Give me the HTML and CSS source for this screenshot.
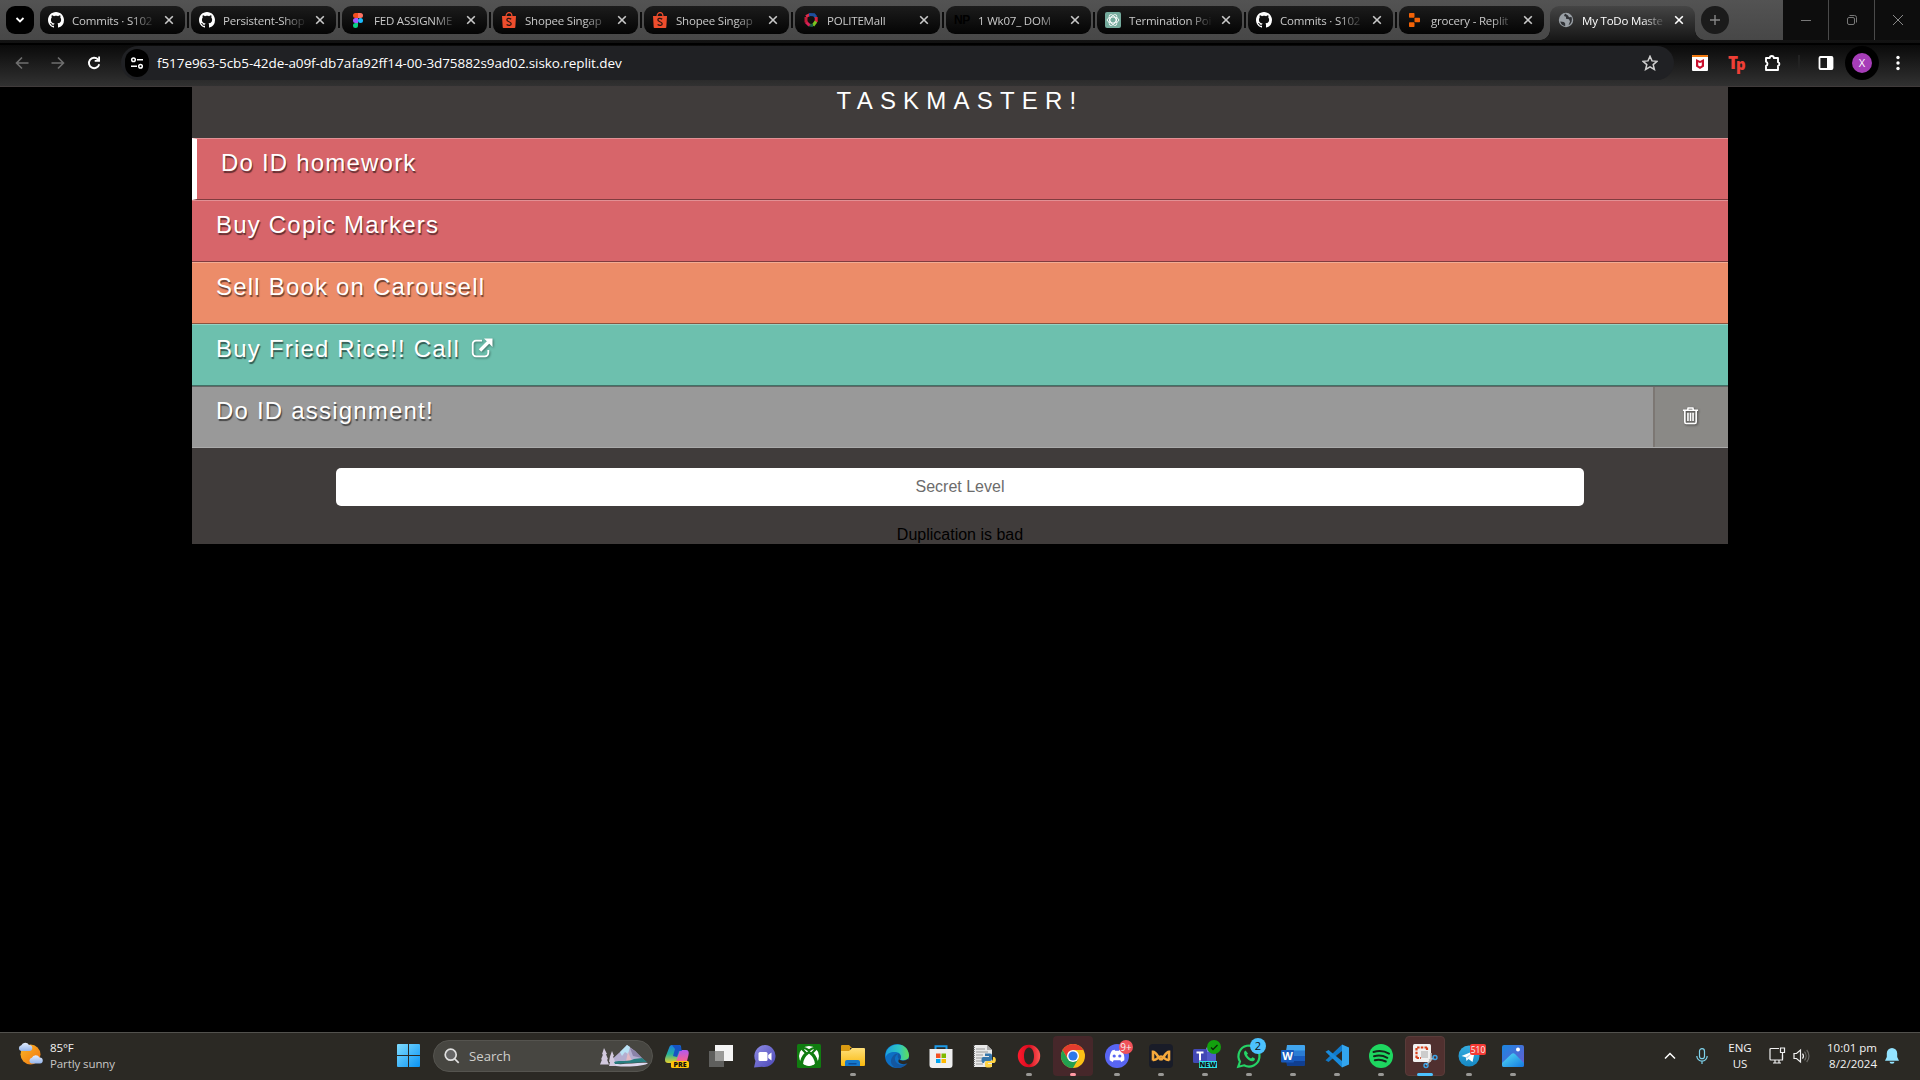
FILE: index.html
```html
<!DOCTYPE html>
<html lang="en">
<head>
<meta charset="utf-8">
<title>My ToDo Master</title>
<link rel="stylesheet" href="styles.css">
</head>
<body>
<svg class="defs" aria-hidden="true">
  <defs>
    <symbol id="github" viewBox="0 0 16 16"><path fill="#fff" d="M8 0C3.58 0 0 3.58 0 8c0 3.54 2.29 6.53 5.47 7.59.4.07.55-.17.55-.38 0-.19-.01-.82-.01-1.49-2.01.37-2.53-.49-2.69-.94-.09-.23-.48-.94-.82-1.13-.28-.15-.68-.52-.01-.53.63-.01 1.08.58 1.23.82.72 1.21 1.87.87 2.33.66.07-.52.28-.87.51-1.07-1.78-.2-3.64-.89-3.64-3.95 0-.87.31-1.59.82-2.15-.08-.2-.36-1.02.08-2.12 0 0 .67-.21 2.2.82.64-.18 1.32-.27 2-.27s1.36.09 2 .27c1.53-1.04 2.2-.82 2.2-.82.44 1.1.16 1.92.08 2.12.51.56.82 1.27.82 2.15 0 3.07-1.87 3.75-3.65 3.95.29.25.54.73.54 1.48 0 1.07-.01 1.93-.01 2.2 0 .21.15.46.55.38A8.01 8.01 0 0 0 16 8c0-4.42-3.58-8-8-8z"/></symbol>
    <symbol id="shopee" viewBox="0 0 16 16"><path fill="#ee4d2d" d="M1 4h14l-.7 11.2a.8.8 0 0 1-.8.8h-11a.8.8 0 0 1-.8-.8z"/><path d="M5 4.500C5 -.8 11 -.8 11 4.500" fill="none" stroke="#ee4d2d" stroke-width="1.200"/><path d="M10.200 7.100C7.800 5.700 5.800 6.400 5.900 8c.1 1.900 4.300 1.600 4.300 3.700 0 1.900-2.600 2.300-4.600.8" fill="none" stroke="#2b1510" stroke-width="1.300"/></symbol>
    <symbol id="x" viewBox="0 0 10 10"><path d="M1.200 1.200l7.600 7.600M8.800 1.200L1.200 8.800" fill="none" stroke="currentColor" stroke-width="1.600"/></symbol>
    <linearGradient id="win" x1="0" y1="0" x2="1" y2="1"><stop offset="0" stop-color="#7fdcff"/><stop offset="1" stop-color="#0a94f5"/></linearGradient>
    <linearGradient id="sun" x1="0" y1="0" x2="1" y2="1"><stop offset="0" stop-color="#fbb829"/><stop offset="1" stop-color="#f0720c"/></linearGradient>
    <linearGradient id="cloud" x1="0" y1="0" x2="0" y2="1"><stop offset="0" stop-color="#e4edfc"/><stop offset="1" stop-color="#94b5ec"/></linearGradient>
    <linearGradient id="copA" x1="0" y1="0" x2="0" y2="1"><stop offset="0" stop-color="#1b7de8"/><stop offset=".5" stop-color="#25b39a"/><stop offset="1" stop-color="#e8d12b"/></linearGradient>
    <linearGradient id="copB" x1="0" y1="0" x2="0" y2="1"><stop offset="0" stop-color="#b259f2"/><stop offset=".6" stop-color="#f0609a"/><stop offset="1" stop-color="#ff9a5c"/></linearGradient>
    <linearGradient id="chat" x1="0" y1="0" x2="1" y2="1"><stop offset="0" stop-color="#8f8ce6"/><stop offset="1" stop-color="#4a47b5"/></linearGradient>
    <linearGradient id="folder" x1="0" y1="0" x2="0" y2="1"><stop offset="0" stop-color="#ffe07a"/><stop offset="1" stop-color="#f9b90f"/></linearGradient>
    <linearGradient id="edgeA" x1="0" y1="0" x2="1" y2="0"><stop offset="0" stop-color="#1aa0e0"/><stop offset=".6" stop-color="#2fc7c0"/><stop offset="1" stop-color="#62df52"/></linearGradient>
    <linearGradient id="opera" x1="0" y1="0" x2="1" y2="0"><stop offset="0" stop-color="#ff1b2d"/><stop offset=".5" stop-color="#d80a1e"/><stop offset="1" stop-color="#ff5a55"/></linearGradient>
    <linearGradient id="photo" x1="0" y1="0" x2="1" y2="1"><stop offset="0" stop-color="#1a86e0"/><stop offset="1" stop-color="#6a5bd0"/></linearGradient>
    <linearGradient id="hill" x1="0" y1="0" x2="1" y2="1"><stop offset="0" stop-color="#55e0f7"/><stop offset="1" stop-color="#1478e0"/></linearGradient>
    <linearGradient id="tele" x1="0" y1="0" x2="0" y2="1"><stop offset="0" stop-color="#35ace0"/><stop offset="1" stop-color="#1688c4"/></linearGradient>
  </defs>
</svg>

<header class="browser">
  <div class="tabstrip">
    <button class="tabsearch"><svg width="10" height="10" viewBox="0 0 10 10"><path d="M1.500 3l3.500 3.500L8.500 3" fill="none" stroke="#fff" stroke-width="1.800"/></svg></button>
    <div class="tabs">
      <div class="tab"><svg class="fav"><use href="#github"/></svg><span>Commits · S102</span><svg class="close"><use href="#x"/></svg></div>
      <div class="tab"><svg class="fav"><use href="#github"/></svg><span>Persistent-Shop</span><svg class="close"><use href="#x"/></svg></div>
      <div class="tab"><svg class="fav" viewBox="0 0 16 16"><path d="M3 3.500A2.500 2.500 0 0 1 5.500 1H8v5H5.500A2.500 2.500 0 0 1 3 3.500z" fill="#f24e1e"/><path d="M8 1h2.500a2.500 2.500 0 0 1 0 5H8z" fill="#ff7262"/><path d="M3 8.500A2.500 2.500 0 0 1 5.500 6H8v5H5.500A2.500 2.500 0 0 1 3 8.500z" fill="#a259ff"/><circle cx="10.500" cy="8.500" r="2.500" fill="#1abcfe"/><path d="M3 13.500A2.500 2.500 0 0 1 5.500 11H8v2.500a2.500 2.500 0 0 1-5 0z" fill="#0acf83"/></svg><span>FED ASSIGNME</span><svg class="close"><use href="#x"/></svg></div>
      <div class="tab"><svg class="fav"><use href="#shopee"/></svg><span>Shopee Singap</span><svg class="close"><use href="#x"/></svg></div>
      <div class="tab"><svg class="fav"><use href="#shopee"/></svg><span>Shopee Singap</span><svg class="close"><use href="#x"/></svg></div>
      <div class="tab"><svg class="fav" viewBox="0 0 16 16" fill="none" stroke-width="3"><path d="M7 2.500L3 4.500" stroke="#e02b4b"/><path d="M6 2.500l5 .2 2 2.500" stroke="#1d4f9e"/><path d="M13.200 5v5" stroke="#d8213d"/><path d="M13 9.500l-3 4" stroke="#7ac520"/><path d="M10 13.500l-4-.5" stroke="#1c5f45"/><path d="M6.500 13.500L3 10" stroke="#d81e55"/><path d="M3 10.500V5" stroke="#c11c38"/></svg><span>POLITEMall</span><svg class="close"><use href="#x"/></svg></div>
      <div class="tab"><b class="fav np">NP</b><span>1 Wk07_ DOM</span><svg class="close"><use href="#x"/></svg></div>
      <div class="tab"><svg class="fav" viewBox="0 0 16 16"><rect width="16" height="16" rx="2" fill="#74aa9c"/><g fill="none" stroke="#fff" stroke-width=".9"><ellipse cx="8" cy="8" rx="5.800" ry="3"/><ellipse cx="8" cy="8" rx="5.800" ry="3" transform="rotate(60 8 8)"/><ellipse cx="8" cy="8" rx="5.800" ry="3" transform="rotate(120 8 8)"/></g></svg><span>Termination Poi</span><svg class="close"><use href="#x"/></svg></div>
      <div class="tab"><svg class="fav"><use href="#github"/></svg><span>Commits · S102</span><svg class="close"><use href="#x"/></svg></div>
      <div class="tab"><svg class="fav" viewBox="0 0 16 16" fill="#f26207"><rect x="2" y="1" width="5.500" height="4.700" rx=".7"/><rect x="7.500" y="5.700" width="5.500" height="4.600" rx=".7"/><rect x="2" y="10.300" width="5.500" height="4.700" rx=".7"/></svg><span>grocery - Replit</span><svg class="close"><use href="#x"/></svg></div>
      <div class="tab active"><svg class="fav" viewBox="0 0 16 16"><circle cx="8" cy="8" r="7.200" fill="#9aa0a6"/><path d="M2.200 9.500L6 10l1.200 1.500v2.700A6.500 6.500 0 0 1 2.200 9.500zM7 1.500L6 4l2 .8v2l3 .4 1 2.300-1.500 3.700A6.500 6.500 0 0 0 13.500 5L11 5.300 10 3.500z" fill="#303236"/></svg><span>My ToDo Maste</span><svg class="close"><use href="#x"/></svg></div>
    </div>
    <button class="newtab"><svg width="12" height="12" viewBox="0 0 12 12"><path d="M6 1v10M1 6h10" stroke="#868686" stroke-width="1.400"/></svg></button>
    <div class="winctl">
      <i><svg width="12" height="12"><path d="M1 6.500h10" stroke="#777"/></svg></i>
      <i><svg width="12" height="12" fill="none" stroke="#777"><rect x="1.500" y="3.500" width="7" height="7" rx="1.500"/><path d="M3.500 1.500h5a2 2 0 0 1 2 2v5"/></svg></i>
      <i><svg width="12" height="12"><path d="M1 1l10 10M11 1L1 11" stroke="#888"/></svg></i>
    </div>
  </div>
  <div class="toolbar">
    <svg class="nav" viewBox="0 0 16 16"><path d="M14.500 8H2.500M8 2.500L2.500 8 8 13.500" fill="none" stroke="#6f6f6f" stroke-width="1.600"/></svg>
    <svg class="nav" viewBox="0 0 16 16"><path d="M1.500 8h12M8 2.500L13.500 8 8 13.500" fill="none" stroke="#6f6f6f" stroke-width="1.600"/></svg>
    <svg class="nav" viewBox="0 0 16 16"><path d="M13.200 9.200A5.200 5.200 0 1 1 12 4.500l1 1.200" fill="none" stroke="#fff" stroke-width="1.900"/><path d="M14 1.500v5.300H8.700V5h3.500V1.500z" fill="#fff"/></svg>
    <div class="omnibox">
      <span class="site"><svg width="14" height="14" viewBox="0 0 14 14" fill="none" stroke="#fff" stroke-width="1.500"><circle cx="3.500" cy="3.800" r="1.800"/><path d="M7 3.800h6M1 10.200h6"/><circle cx="10.500" cy="10.200" r="1.800"/></svg></span>
      <span class="url">f517e963-5cb5-42de-a09f-db7afa92ff14-00-3d75882s9ad02.sisko.replit.dev</span>
      <svg class="star" viewBox="0 0 16 16"><path d="M8 1.300l2 4.600 5 .4-3.800 3.300 1.200 4.900L8 11.900l-4.400 2.600 1.200-4.900L1 6.300l5-.4z" fill="none" stroke="#d0d0d0" stroke-width="1.500"/></svg>
    </div>
    <div class="exts">
      <svg width="16" height="16"><rect width="16" height="16" rx="1" fill="#fff"/><path d="M0 2V1a1 1 0 0 1 1-1h14a1 1 0 0 1 1 1v1z" fill="#f27a11"/><path d="M4 4l4 2 4-2v7.500L8 14l-4-2.500z" fill="#c8102e"/><path d="M6.200 7.200L8 8.100l1.800-.9v3.300L8 11.400l-1.800-.9z" fill="#fff"/></svg>
      <b class="tp"><span>T</span><small>p</small></b>
      <svg width="17" height="18" viewBox="0 0 17 18"><path d="M2 4h3.800a2 2 0 0 1 4 0H14v4.200a2 2 0 0 1 0 3.800v4H2v-4a2.300 2.300 0 0 0 0-4.300z" fill="none" stroke="#fff" stroke-width="1.900" stroke-linejoin="round"/></svg>
      <i class="bar"></i>
      <svg width="16" height="16"><rect x="1.500" y="2" width="13" height="12" rx="1" fill="none" stroke="#fff" stroke-width="1.800"/><path d="M9 2h6v12H9z" fill="#fff"/></svg>
      <span class="avatar"><i>X</i></span>
      <svg width="4" height="16" fill="#fff"><circle cx="2" cy="2.500" r="1.700"/><circle cx="2" cy="8" r="1.700"/><circle cx="2" cy="13.500" r="1.700"/></svg>
    </div>
  </div>
</header>

<main class="page">
  <h1>TASKMASTER!</h1>
  <ul class="tasks">
    <li class="red current">Do ID homework</li>
    <li class="red">Buy Copic Markers</li>
    <li class="orange">Sell Book on Carousell</li>
    <li class="green">Buy Fried Rice!! Call <svg class="ext" viewBox="0 0 22 20"><path d="M11 2.700H5A3.300 3.300 0 0 0 1.700 6v9A3.300 3.300 0 0 0 5 18.300h9a3.300 3.300 0 0 0 3.300-3.300v-3" fill="none" stroke="currentColor" stroke-width="1.800"/><path d="M9 12.500l8.500-8.500" stroke="currentColor" stroke-width="3.400"/><path d="M13 .5h8.500V9z" fill="currentColor"/></svg></li>
    <li class="grey"><span>Do ID assignment!</span><button class="del"><svg width="18" height="20" viewBox="0 0 18 20" fill="none" stroke="#fff" stroke-width="1.700"><path d="M1 4.500h16M5.800 4.300L6.500 2h5l.7 2.300M3 4.500V17a1.500 1.500 0 0 0 1.500 1.500h9A1.500 1.500 0 0 0 15 17V4.500M6.300 7.200v8.500M9 7.200v8.500M11.700 7.200v8.500"/></svg></button></li>
  </ul>
  <input class="secret" type="text" placeholder="Secret Level">
  <p class="msg">Duplication is bad</p>
</main>

<footer class="taskbar">
  <div class="weather">
    <svg width="25" height="24" viewBox="0 0 25 24"><circle cx="12.500" cy="12.500" r="10" fill="url(#sun)"/><path d="M3 9a3 3 0 0 1 .3-5.800A4.300 4.300 0 0 1 11 3a3 3 0 0 1 .5 6z" fill="url(#cloud)"/><path d="M13.500 21.500a3 3 0 0 1 .3-5.800 4.300 4.300 0 0 1 7.700-.2 3 3 0 0 1 .5 6z" fill="url(#cloud)"/></svg>
    <div><b>85°F</b><span>Partly sunny</span></div>
  </div>
  <div class="apps">
    <svg class="start" viewBox="0 0 23 23" fill="url(#win)"><path d="M0 1a1 1 0 0 1 1-1h10v11H0zM12 0h10a1 1 0 0 1 1 1v10H12zM0 12h11v11H1a1 1 0 0 1-1-1zM12 12h11v10a1 1 0 0 1-1 1H12z"/></svg>
    <div class="search">
      <svg width="16" height="16" viewBox="0 0 16 16" fill="none" stroke="#e0e0e0" stroke-width="1.700"><circle cx="6.700" cy="6.700" r="5.500" fill="#666"/><path d="M10.700 10.900l4 4"/></svg>
      <span>Search</span>
      <svg class="mount" width="49" height="24" viewBox="0 0 49 24"><path d="M9 18L20 8l7-7 8 6 11 11z" fill="#b4aed0"/><path d="M20 8l7-7 3 2-2 7-3-2-3 4z" fill="#b9e2f5"/><path d="M28 8l4 9h-6z" fill="#e2b9c4"/><path d="M30 4l5 3 7 7-9-2z" fill="#8b82a8"/><path d="M12 18c10-2 16 0 22-3l8-1 5 4-33 2z" fill="#277e80"/><path d="M10 19c12 3 25-1 38 0-2 4-34 5-38 1z" fill="#ded8ee"/><path d="M4 4l3 6-1 .3 2 5-1 .2 2 5H0l2-5H1l2-5-1-.3zM12 7l2 5-1 .5 2 5-1 .5 2 4H9l1-4-1-.5 1-5z" fill="#d3cadf"/></svg>
    </div>
    <div class="row">
      <i><svg viewBox="0 0 24 24"><path d="M7 1h7c2 0 2.500 2 2 4l-3 11c-.6 2-2 3-4 3H3c-3 0-3.500-3-2.500-6L4 4c.6-2 1.500-3 3-3z" fill="url(#copA)"/><path d="M15 6h6c2.500 0 3.300 2 2.500 5l-2 8c-.6 2-2 3-4 3h-8z" fill="url(#copB)"/><path d="M7 1h7c2 0 2 3 3 6h-3l-2 6-4-1 2-7z" fill="#1553c4"/><rect x="6" y="17" width="18" height="7" rx="1.500" fill="#ffc40a"/><text x="15" y="23" class="pre">PRE</text></svg></i>
      <i><svg viewBox="0 0 24 24"><rect x="6" y="1" width="18" height="16" fill="#f4f4f4"/><path d="M0 7h15v16H0z" fill="#5f5f5d"/><path d="M6 7h9v10H6z" fill="#9a9a98"/><path d="M15 17h9v0H15z" fill="#5f5f5d"/></svg></i>
      <i><svg viewBox="0 0 24 24"><path d="M12 1a11 11 0 1 1-3 21.700L1 23.500 2.500 17A11 11 0 0 1 12 1z" fill="url(#chat)"/><rect x="5.500" y="8" width="9" height="9" rx="1.500" fill="#fff"/><path d="M15.200 11l3.300-2.500v8l-3.300-2.500z" fill="#fff"/></svg></i>
      <i><svg viewBox="0 0 24 24"><rect width="24" height="24" rx="1.500" fill="#107c10"/><circle cx="12" cy="12" r="10" fill="#fff"/><path d="M5 4c3-.5 5 1 7 2.500C14 5 16 3.500 19 4M4 20c0-6 3-9 5-11L4.500 4.500M20 20c0-6-3-9-5-11l4.500-4.500" fill="none" stroke="#107c10" stroke-width="2.200"/><path d="M5 20C5 15 8 11 12 8c4 3 7 7 7 12" fill="none" stroke="#107c10" stroke-width="2.200"/><path d="M12 12c3 2.500 5 5 5.500 8a10 10 0 0 1-11 0C7 17 9 14.500 12 12z" fill="#fff"/></svg></i>
      <i class="run"><svg viewBox="0 0 24 24"><path d="M0 2a1 1 0 0 1 1-1h7l3 3h-2v4H0z" fill="#d99a12"/><path d="M0 7h8l3-3h12a1 1 0 0 1 1 1v16a1 1 0 0 1-1 1H1a1 1 0 0 1-1-1z" fill="url(#folder)"/><path d="M4 22v-4a2 2 0 0 1 2-2h11a2 2 0 0 1 2 2v4z" fill="#1579cc"/><path d="M7.500 19h8v1.500h-8z" fill="#0c4d9a"/></svg></i>
      <i><svg viewBox="0 0 24 24"><circle cx="12" cy="12" r="12" fill="#0d6fc4"/><path d="M1 9C3-1 22-4 24 11c.3 5-5 6-9 4.500 2-2 1-7-4-7.500C6 7.500 2 9.500.5 13z" fill="url(#edgeA)"/><path d="M15 15.500c-3-1-2.500-5-1.500-5.500-4 1-5 6.500-1 9.500 3 2 7 1.500 10-.5-2 3.500-6 5-10 5C6 23 4 17 8 12c1-1.500 3-3 5.500-2.500 3 2 3 4.500 1.500 6z" fill="#1457a0"/><path d="M14 15.300c2 2 6 2 9.400-.5l.6 3c-2 2-5 3-8 2-3-1-3-3-2-4.500z" fill="#2b2924"/></svg></i>
      <i><svg viewBox="0 0 24 24"><path d="M6.500 6V2.200h11V6" fill="none" stroke="#1c9ae8" stroke-width="2"/><path d="M.5 5h23v16a3 3 0 0 1-3 3h-17a3 3 0 0 1-3-3z" fill="#efefef"/><path d="M7 9.500h4.500V14H7z" fill="#f25022"/><path d="M12.500 9.500H17V14h-4.500z" fill="#7fba00"/><path d="M7 15h4.500v4H7z" fill="#00a4ef"/><path d="M12.500 15H17v4h-4.500z" fill="#ffb900"/></svg></i>
      <i><svg viewBox="0 0 24 24"><path d="M1 1h13l5 5v17H1z" fill="#e9e9e9"/><path d="M14 1v5h5z" fill="#aaa"/><path d="M3 5h9M3 8h12M3 11h7M3 14h6M3 17h6M3 20h7" stroke="#999"/><path d="M1 1v22" stroke="#555" stroke-width="1.500" stroke-dasharray="1 1"/><path d="M12 9.500h5a2 2 0 0 1 2 2V15a2 2 0 0 1-2 2h-4a2 2 0 0 0-2 2h-1c-2 0-2-6 0-6h6v-1h-4z" fill="#3776ab"/><path d="M20 13h1c2.500 0 2.500 6 0 6h-6v1h4v1.500a2 2 0 0 1-2 2h-3a2 2 0 0 1-2-2V19a2 2 0 0 1 2-2h4a2 2 0 0 0 2-2z" fill="#ffd343"/></svg></i>
      <i class="run"><svg viewBox="0 0 24 24"><path fill-rule="evenodd" d="M12 .8a11.200 11.200 0 1 1 0 22.400A11.200 11.200 0 0 1 12 .8zM12 3.500c-3 0-5 3.800-5 8.500s2 8.500 5 8.500 5-3.800 5-8.500-2-8.500-5-8.500z" fill="url(#opera)"/></svg></i>
      <i class="run alert"><svg viewBox="0 0 24 24"><circle cx="12" cy="12" r="12" fill="#fbc116"/><path d="M1.600 6A12 12 0 0 1 22.400 6H12L7 15z" fill="#e33b2e"/><path d="M1.600 6A12 12 0 0 0 12 24l5.200-9L12 17.500 6.800 15z" fill="#23a050"/><circle cx="12" cy="12" r="6" fill="#fff"/><circle cx="12" cy="12" r="4.600" fill="#2f78ea"/></svg></i>
      <i class="run"><svg viewBox="0 0 24 24"><circle cx="12" cy="12" r="12" fill="#5865f2"/><path d="M7 6.500l2.500-.8.600 1h3.800l.6-1 2.500.8c2 3 2.700 6.500 2.300 9.700l-3 1.700-1-1.700H8.700l-1 1.700-3-1.700c-.4-3.200.3-6.700 2.300-9.700z" fill="#fff"/><circle cx="9.200" cy="12" r="1.600" fill="#5865f2"/><circle cx="14.800" cy="12" r="1.600" fill="#5865f2"/></svg><em class="b red9">9+</em></i>
      <i class="run"><svg viewBox="0 0 24 24"><rect width="24" height="24" rx="4" fill="#191c28"/><path d="M4 16.500V7.800c3-.3 4.500 5 8 8.200M20 16.500V7.800c-3-.3-4.500 5-8 8.200M4 16c3.500.8 5-3.500 8-3.500s4.500 4.300 8 3.500" fill="none" stroke="#f7a93b" stroke-width="2.600"/></svg></i>
      <i class="run"><svg viewBox="0 0 24 24"><circle cx="17" cy="6" r="4" fill="#7b83eb"/><rect x="8" y="8" width="15" height="13" rx="2" fill="#5059c9"/><rect y="5" width="14" height="14" rx="1.500" fill="#4248b5"/><path d="M3.500 8.500h7M7 8.500v8" stroke="#fff" stroke-width="2"/><rect x="6" y="17" width="18" height="7" fill="#2fe0e4"/><text x="15" y="23" class="pre">NEW</text></svg><em class="b ok"><svg viewBox="0 0 14 14"><path d="M4 7.500l2 2L10.500 5" fill="none" stroke="#0a2a08" stroke-width="1.300"/></svg></em></i>
      <i class="run"><svg viewBox="0 0 24 24"><path d="M1.300 22.700L3 17.500A10.500 10.500 0 1 1 7 21.300z" fill="none" stroke="#25d366" stroke-width="2.200"/><path d="M8.500 6.500c-2 1-2 3.500 0 6.200s5 5 7.500 4.500c1.500-.5 2.500-2 1.500-3l-2-1-1.500 1.300c-2-.7-3.500-2.300-4-3.700l1-1.300z" fill="#25d366"/></svg><em class="b two">2</em></i>
      <i class="run"><svg viewBox="0 0 24 24"><path d="M6 1h17a1 1 0 0 1 1 1v5H5z" fill="#41a5ee"/><path d="M5 6.500h19V12H5z" fill="#2b7cd3"/><path d="M5 12h19v5.500H5z" fill="#185abd"/><path d="M5 17h19v4a1 1 0 0 1-1 1H6z" fill="#103f91"/><rect y="6" width="13" height="12.500" rx="1" fill="#185abd"/><text x="6.500" y="16" class="w">W</text></svg></i>
      <i class="run"><svg viewBox="0 0 24 24"><path d="M17 .5l7 3v17l-7 3z" fill="#32a5ee"/><path d="M17 .5v6.500L3.500 18 .5 16.200z" fill="#1079c9"/><path d="M17 23.500V17L3.500 6 .5 7.800z" fill="#198bdc"/></svg></i>
      <i class="run"><svg viewBox="0 0 24 24"><circle cx="12" cy="12" r="12" fill="#1ed760"/><path d="M4.500 8c5-1.500 11-1 15.500 1.600M5 12.300c4.500-1.300 9.300-.7 13.300 1.500M5.800 16.200c4-1 7.500-.5 11 1.300" fill="none" stroke="#15271a" stroke-width="2" stroke-linecap="round"/></svg></i>
      <i class="run focus"><svg viewBox="0 0 24 24"><rect width="18" height="18" rx="1.500" fill="#f1f1f1"/><path d="M3.500 14V3.500H14M3.500 14H8M14 3.500V7" fill="none" stroke="#d8401c" stroke-width="2.200" stroke-dasharray="2.500 1.200"/><path d="M8 7h7v7H8z" fill="#ccc"/><path d="M18 9v7l-5 5M16 16l5-2" stroke="#c0c0c0" stroke-width="1.600" fill="none"/><circle cx="22" cy="13.500" r="2" fill="none" stroke="#3ba4e8" stroke-width="1.400"/><circle cx="13" cy="21.500" r="2" fill="none" stroke="#3ba4e8" stroke-width="1.400"/></svg></i>
      <i class="run"><svg viewBox="0 0 24 24"><circle cx="12" cy="12" r="10.500" fill="url(#tele)"/><path d="M4.500 12L18 6.500 15.500 18l-4-3-2 2-.7-3.700z" fill="#fff"/><path d="M8.800 13.300L16 8.500l-6 6z" fill="#b5d8ee"/></svg><em class="b n510">510</em></i>
      <i class="run"><svg viewBox="0 0 24 24"><rect x="1" y="1" width="22" height="22" rx="2" fill="url(#photo)"/><circle cx="17" cy="5.500" r="2" fill="#fff"/><path d="M1 19l9.500-9a2.500 2.500 0 0 1 3.500 0l9 9v2a2 2 0 0 1-2 2H3a2 2 0 0 1-2-2z" fill="url(#hill)"/></svg></i>
    </div>
  </div>
  <div class="tray">
    <svg width="12" height="8" viewBox="0 0 12 8"><path d="M1 6.500l5-5 5 5" fill="none" stroke="#fff" stroke-width="1.500"/></svg>
    <svg class="mic" width="12" height="16" viewBox="0 0 12 16" fill="none" stroke="#7fd3ec" stroke-width="1.200"><rect x="3.500" y=".7" width="5" height="10" rx="2.500"/><path d="M.8 8a5.200 5.200 0 0 0 10.400 0M6 13.200V16"/></svg>
    <div class="lang">ENG<br>US</div>
    <svg width="17" height="17" viewBox="0 0 17 17" fill="none" stroke="#f0f0f0" stroke-width="1.200"><path d="M10 1.500H2a1 1 0 0 0-1 1V12a1 1 0 0 0 1 1h11.500V8M4 16h8M6 13v3M10 13v3"/><path d="M11.500 1h4v4.500h-4zM13.500 5.500V12"/></svg>
    <svg class="spk" width="17" height="16" viewBox="0 0 17 16" fill="none" stroke="#f0f0f0" stroke-width="1.200"><path d="M1 5.500h2.500L7.500 2v12L3.500 10.500H1z"/><path d="M9.500 5.500a4 4 0 0 1 0 5"/><path d="M11.500 3.700a6.500 6.500 0 0 1 0 8.600M13.700 2a9 9 0 0 1 0 12" stroke="#6b6a66"/></svg>
    <div class="clock">10:01 pm<br>8/2/2024</div>
    <svg width="14" height="16" viewBox="0 0 14 16" fill="#93e3ff"><path d="M7 0a5.200 5.200 0 0 1 5.200 5.200V9L14 12.800H0L1.800 9V5.200A5.200 5.200 0 0 1 7 0zM4.500 13.800h5a2.500 2 0 0 1-5 0z"/></svg>
  </div>
</footer>
</body>
</html>
```

FILE: styles.css
```css
* { box-sizing: border-box; }
body {
  margin: 0;
  width: 1920px;
  height: 1080px;
  overflow: hidden;
  background: #000;
  display: flex;
  flex-direction: column;
  font-family: "Liberation Sans", Arial, sans-serif;
}
button { border: 0; padding: 0; font: inherit; }
i, em { font-style: normal; }
svg { display: block; flex: none; }
.defs { position: absolute; width: 0; height: 0; }

/* Browser window */
.browser { height: 87px; flex: none; font-family: "Open Sans", "Noto Sans", sans-serif; color: #fff; background: #0b0b0b; }
.tabstrip { height: 40px; display: flex; align-items: flex-start; background: linear-gradient(#535353, #474747); padding-left: 6px; }
.tabsearch, .newtab { width: 28px; height: 28px; margin-top: 6px; display: grid; place-items: center; background: #000; border-radius: 9px; }
.newtab { border-radius: 14px; background: #1b1b1b; margin-left: 6px; }
.tabs { display: flex; gap: 6px; padding: 6px 0 0 6px; }
.tab {
  position: relative;
  width: 145px;
  height: 28px;
  display: flex;
  align-items: center;
  padding-left: 8px;
  border-radius: 9px;
  background: linear-gradient(#1c1c1c, #040404);
  color: #c9c9c9;
  font-size: 11.5px;
  letter-spacing: -.2px;
}
.tab::after { content: ""; position: absolute; right: -4px; top: 6px; width: 2px; height: 16px; background: #0c0c0c; }
.tab:nth-last-child(-n+2)::after { display: none; }
.fav { width: 16px; height: 16px; flex: none; }
.np { width: 18px; margin-right: -2px; font: bold 12px/16px "Liberation Sans", sans-serif; color: #000; letter-spacing: -.5px; }
.tab span {
  width: 86px;
  margin: 0 6px 0 8px;
  white-space: nowrap;
  -webkit-mask-image: linear-gradient(90deg, #000 60px, transparent 84px);
  mask-image: linear-gradient(90deg, #000 60px, transparent 84px);
}
.close { width: 10px; height: 10px; }
.tab.active {
  height: 34px;
  padding-bottom: 6px;
  color: #fff;
  border-radius: 9px 9px 0 0;
  background: linear-gradient(#454545, #171717);
}
.tab.active::before, .tab.active::after {
  content: ""; display: block; position: absolute; top: auto; bottom: 0; width: 10px; height: 10px;
}
.tab.active::before { left: -10px; background: radial-gradient(circle at 0 0, transparent 9.5px, #1b1b1b 10px); }
.tab.active::after { right: -10px; background: radial-gradient(circle at 100% 0, transparent 9.5px, #1b1b1b 10px); }
.winctl { margin-left: auto; width: 137px; height: 40px; display: flex; background: #0d0d0d; }
.winctl i { flex: 1; display: grid; place-items: center; }
.winctl i + i { border-left: 1px solid #4a4a4a; }

.toolbar {
  height: 47px;
  display: flex;
  align-items: center;
  padding: 0 20px 1px 14px;
  background: linear-gradient(#141414 0, #111 3px, #000 3px, #000 5px, #0a0a0a 5px, #313131 46px, #403b3b 46px);
}
.nav { width: 16px; height: 16px; margin-right: 20px; }
.omnibox {
  width: 1553px;
  height: 34px;
  margin-left: -1px;
  border-radius: 17px;
  background: #202124;
  display: flex;
  align-items: center;
  padding: 0 16px 0 4px;
}
.site { width: 24px; height: 28px; border-radius: 12px; background: #000; display: grid; place-items: center; }
.url { margin-left: 8px; font-size: 13.5px; letter-spacing: -.08px; white-space: nowrap; }
.star { width: 16px; height: 16px; margin-left: auto; }
.exts { flex: 1; display: flex; align-items: center; padding-left: 18px; }
.tp { width: 17px; margin-left: 20px; color: #ef3f36; font-size: 17px; line-height: 17px; font-weight: 800; display: flex; letter-spacing: -2px; }
.tp small { font-size: 15px; padding-top: 2px; }
.exts > svg:nth-of-type(2) { margin-left: 19px; }
.bar { width: 2px; height: 16px; margin-left: 17px; background: #222; }
.exts > svg:nth-of-type(3) { margin-left: 18px; }
.avatar { width: 34px; height: 34px; margin: 0 16px 0 11px; border-radius: 50%; background: #000; display: grid; place-items: center; }
.exts > svg:last-child { margin-left: 1px; }
.avatar i { width: 20px; height: 20px; border-radius: 50%; background: #a63db8; font-size: 11px; line-height: 20px; text-align: center; }

/* Task list */
.page { width: 1536px; height: 457px; flex: none; margin: 0 auto; background: #403c3b; text-align: center; }
h1 { margin: 0; height: 51px; font-weight: 400; font-size: 24px; line-height: 27px; letter-spacing: 7.2px; color: #fff; }
.tasks { list-style: none; margin: 0; padding: 0; text-align: left; }
.tasks li {
  height: 62px;
  padding: 10px 24px;
  font-size: 24px;
  line-height: 28px;
  letter-spacing: 1.2px;
  color: #fff;
  text-shadow: 1px 2px 1px rgba(0, 0, 0, .55);
  border-top: 1px solid rgba(255, 255, 255, .28);
  border-bottom: 1px solid rgba(0, 0, 0, .4);
}
.red { background: #d7656a; }
.orange { background: #ec8c69; }
.green { background: #6dc0ae; }
.tasks .current { border-left: 5px solid #fff; }
.tasks .grey { background: #999; display: flex; justify-content: space-between; padding: 0 0 0 24px; border-top-color: #666; border-bottom-color: #aaa; }
.grey span { padding-top: 10px; }
.ext { display: inline-block; width: 22px; height: 20px; margin-left: 3px; vertical-align: -1px; filter: drop-shadow(1px 1px 1px rgba(0, 0, 0, .4)); }
.del { width: 75px; display: grid; place-items: center; background: #8a8986; border-left: 2px solid #7c7773; }
.del svg { width: 17px; height: 19px; margin: -4px 0 0 -2px; filter: drop-shadow(1px 1px 1px rgba(0, 0, 0, .5)); }
.secret {
  display: block;
  width: 1248px;
  height: 38px;
  margin: 20px auto 0;
  padding: 0;
  border: 0;
  border-radius: 5px;
  background: #fff;
  font: 16px "Liberation Sans", Arial, sans-serif;
  text-align: center;
}
.secret::placeholder { color: #6c6c6c; }
.msg { margin: 19px 0 0; font-size: 16px; line-height: 19px; color: #000; }

/* Windows taskbar */
.taskbar {
  height: 48px;
  margin-top: auto;
  padding-bottom: 2px;
  border-top: 1px solid #52514d;
  background: #2b2924;
  display: grid;
  grid-template-columns: 397px 1fr auto;
  align-items: center;
  color: #f3f3f3;
  font: 11.5px/16px "Open Sans", "Noto Sans", sans-serif;
}
.weather { display: flex; align-items: center; padding-left: 18px; gap: 7px; }
.weather svg { margin-top: -4px; }
.weather b, .weather span { display: block; font-weight: 400; letter-spacing: -.1px; }
.weather span { color: #c8c7c5; }
.apps { display: flex; align-items: center; }
.start { width: 23px; height: 23px; }
.search {
  width: 220px;
  height: 32px;
  margin: 0 4px 0 13px;
  display: flex;
  align-items: center;
  padding: 0 3px 0 10px;
  border-radius: 16px;
  background: #474641;
  border: 1px solid #55544f;
}
.search span { margin-left: 9px; font-size: 13.2px; color: #cfcfcc; }
.mount { margin-left: auto; }
.row { display: flex; gap: 4px; }
.row i { position: relative; width: 40px; height: 40px; display: grid; place-items: center; border-radius: 4px; margin: 0; }
.row i > svg { width: 24px; height: 24px; overflow: visible; }
.run::after { content: ""; position: absolute; bottom: 0; left: 17px; width: 6px; height: 3px; border-radius: 2px; background: #999895; }
.alert { background: #46272a; }
.alert::after { background: #ff99a4; }
.focus { background: #50302f; border: 1px solid #593b39; }
.focus::after { background: #4cc2ff; left: 11px; bottom: -1px; width: 16px; }
.pre { font: 800 7px "Open Sans", sans-serif; text-anchor: middle; fill: #111; }
.w { font: bold 11px "Open Sans", sans-serif; text-anchor: middle; fill: #fff; }
.b { position: absolute; top: 4px; right: 4px; border-radius: 8px; height: 14px; width: 14px; font-size: 10px; line-height: 14px; text-align: center; }
.red9 { background: #f0525a; }
.ok { background: #13a10e; }
.two { background: #4cc2ff; color: #111; width: 16px; height: 16px; line-height: 16px; top: 2px; right: 3px; font-size: 11px; }
.n510 { background: #f53b35; width: 16px; height: 11px; line-height: 11px; border-radius: 2px; font-size: 8.5px; right: 3px; top: 8px; }
.red9, .ok { top: 4px; right: 4px; }
.tray { display: flex; align-items: center; padding-right: 21px; }
.mic { margin-left: 20px; }
.lang { width: 30px; margin: 0 14px 0 17px; text-align: center; }
.spk { margin-left: 7px; }
.clock { width: 67px; margin-right: 8px; text-align: right; white-space: nowrap; }
```
